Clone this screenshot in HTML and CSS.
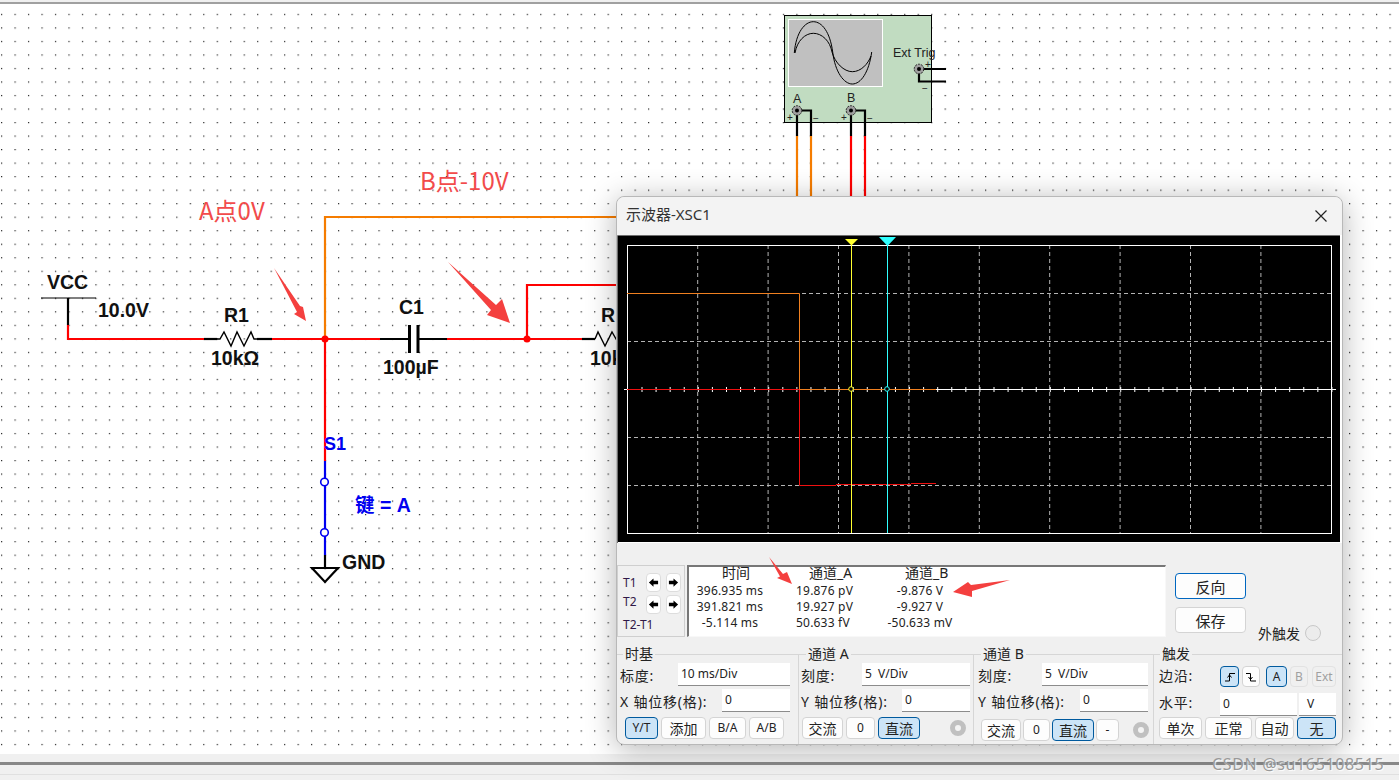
FILE: index.html
```html
<!DOCTYPE html>
<html lang="zh-CN">
<head>
<meta charset="utf-8">
<title>示波器-XSC1</title>
<link rel="stylesheet" href="styles.css">
</head>
<body>
<svg class="defs" width="0" height="0" aria-hidden="true">
  <symbol id="arrow-left" viewBox="0 0 12 12"><path d="M1 6 6 1.5V4.2H11V7.8H6V10.500z"/></symbol>
  <symbol id="arrow-right" viewBox="0 0 12 12"><path d="M11 6 6 1.500V4.200H1V7.800H6V10.500z"/></symbol>
</svg>
<div class="app">
  <div class="topbar"></div>
  <main class="canvas">
    <svg class="schematic" viewBox="0 4 1399 750" width="1399" height="750">
      <defs>
        <pattern id="dots" patternUnits="userSpaceOnUse" x="1" y="0.3" width="13.48" height="13.52">
          <rect class="dot" width="1.2" height="1.2"/>
        </pattern>
      </defs>
      <rect x="0" y="4" width="1399" height="750" fill="url(#dots)"/>

      <!-- wires -->
      <path class="w black thin" d="M41 298H96"/>
      <path class="w black" d="M68 298V325"/>
      <path class="w red" d="M68 325V339H204"/>
      <path class="w black" d="M204 339H217"/>
      <path class="w black zig" d="M217 339 220 339 224 332 231 346 237 332 244 346 251 332 254 339H257"/>
      <path class="w black" d="M257 339H272"/>
      <path class="w red" d="M272 339H380"/>
      <path class="w black" d="M380 339H409M418 339H447"/>
      <path class="w black thick" d="M409.500 325V353M418 325V353"/>
      <path class="w red" d="M447 339H582"/>
      <path class="w black" d="M582 339H595"/>
      <path class="w black zig" d="M595 339 598 332 605 346 612 332 620 346"/>
      <path class="w red" d="M527 339V285H620"/>
      <path class="w orange" d="M325 339V217H620"/>
      <path class="w red" d="M325 339V461"/>
      <path class="w blue" d="M325 461V555"/>
      <circle class="pin" cx="324.500" cy="482" r="3.800"/>
      <circle class="pin" cx="324.500" cy="532.500" r="3.800"/>
      <path class="w black" d="M325 555V567"/>
      <path class="w black" d="M312 568H338L325 582Z"/>
      <circle class="junction" cx="325" cy="339" r="3.500"/>
      <circle class="junction" cx="527" cy="339" r="3.500"/>

      <!-- schematic labels -->
      <text class="part" x="47" y="289">VCC</text>
      <text class="part" x="98" y="317">10.0V</text>
      <text class="part" x="224" y="322">R1</text>
      <text class="part" x="211" y="365">10kΩ</text>
      <text class="part" x="399" y="314">C1</text>
      <text class="part" x="383" y="374">100µF</text>
      <text class="part" x="601" y="322">R</text>
      <text class="part" x="590" y="365">10k</text>
      <text class="part key s1" x="324" y="450">S1</text>
      <text class="part key" x="355" y="512">键 = A</text>
      <text class="part" x="342" y="569">GND</text>
      <text class="note" x="199" y="220">A点0V</text>
      <text class="note" x="420" y="190">B点-10V</text>

      <!-- oscilloscope instrument -->
      <rect class="xsc-body" x="784.500" y="15.500" width="147" height="107"/>
      <rect class="xsc-screen" x="788.500" y="19.500" width="94" height="67"/>
      <path class="curve" d="M794.300 53C796 32 805 21.700 813.300 21.700 822 21.700 830 32 832.700 52 835 72 844 84 852.300 84 861 84 869 72 871.700 52"/>
      <path class="curve" d="M795 53C797 41 805 33.300 813.300 33.300 822 33.300 830 41 832 52 835 63 844 71.700 852.300 71.700 861 71.700 868 64 871 56"/>
      <text class="xsc-text" x="893" y="57">Ext Trig</text>
      <text class="xsc-text" x="793" y="103">A</text>
      <text class="xsc-text" x="847" y="102">B</text>
      <text class="xsc-small" x="925" y="68">+</text>
      <text class="xsc-small" x="922" y="92">−</text>
      <text class="xsc-small" x="787" y="121">+</text>
      <text class="xsc-small" x="813" y="122">−</text>
      <text class="xsc-small" x="841" y="121">+</text>
      <text class="xsc-small" x="867" y="122">−</text>
      <path class="w black" d="M797 110V136M797 110.500H811V136M851 110V136M851 110.500H865V136M919 69H946M919 69V81.500H946"/>
      <path class="w orange" d="M797 136V197M811 136V197"/>
      <path class="w red" d="M851 136V197M865 136V197"/>
      <g class="term">
        <circle cx="797" cy="110.500" r="4.800"/><circle cx="851" cy="110.500" r="4.800"/><circle cx="919" cy="69" r="4.800"/>
      </g>
      <g>
        <circle class="term-dot" cx="797" cy="110.500" r="2"/><circle class="term-dot" cx="851" cy="110.500" r="2"/><circle class="term-dot" cx="919" cy="69" r="2"/>
      </g>
    </svg>
  </main>
  <footer class="statusbar"><div class="status-line"></div><div class="status-edge"></div></footer>

  <section class="scope-window">
    <header class="titlebar">
      <h1 class="title">示波器-XSC1</h1>
      <svg class="close" viewBox="0 0 12 12" width="12" height="12"><path d="M0.500 0.500 11.500 11.500M11.500 0.500 0.500 11.500"/></svg>
    </header>

    <svg class="scope" viewBox="617 235 725 308" width="725" height="308">
      <rect class="sc-frame" x="617" y="235" width="725" height="308"/>
      <path class="sc-edge" d="M617.500 543V235.500H1340"/>
      <rect class="sc-black" x="618" y="236" width="722" height="306"/>
      <path class="sc-grid" d="M697.700 245V533M768.100 245V533M838.500 245V533M908.900 245V533M979.300 245V533M1049.700 245V533M1120.100 245V533M1190.500 245V533M1260.900 245V533M627 293.500H1331M627 341.500H1331M627 437.500H1331M627 485.500H1331"/>
      <rect class="sc-box" x="627.500" y="245.500" width="704" height="288"/>
      <path class="sc-axis" d="M624 389.500H1336"/>
      <path class="sc-ticks" d="M641.500 389.500H1336"/>
      <path class="sc-red" d="M627 389.500H799"/>
      <path class="sc-orange" d="M627 293.500H799.500V389.500H936"/>
      <path class="sc-red" d="M799.500 389.500V485.500H836"/>
      <path class="sc-red thick" d="M836 484.500H911M911 483.500H936"/>
      <path class="sc-yellow" d="M851.500 245V533"/>
      <path class="sc-cyan" d="M887.500 245V533"/>
      <path class="fill-yellow" d="M845 239H858L851.500 245.500Z"/>
      <path class="fill-cyan" d="M879 237H896L887.500 246Z"/>
      <circle class="mark-yellow" cx="851" cy="389" r="2.300"/>
      <circle class="mark-cyan" cx="887" cy="389" r="2.300"/>
    </svg>

    <div class="readout-row">
      <div class="cursors">
        <span class="t-label">T1</span>
        <button class="nudge"><svg width="11" height="11"><use href="#arrow-left"/></svg></button>
        <button class="nudge"><svg width="11" height="11"><use href="#arrow-right"/></svg></button>
        <span class="t-label t-second">T2</span>
        <button class="nudge"><svg width="11" height="11"><use href="#arrow-left"/></svg></button>
        <button class="nudge"><svg width="11" height="11"><use href="#arrow-right"/></svg></button>
        <span class="t-label t-diff">T2-T1</span>
      </div>
      <div class="readout">
        <span class="head h-time">时间</span><span class="head h-a">通道_A</span><span class="head h-b">通道_B</span>
        <span class="val">396.935 ms</span><span class="val left">19.876 pV</span><span class="val">-9.876 V</span>
        <span class="val">391.821 ms</span><span class="val left">19.927 pV</span><span class="val">-9.927 V</span>
        <span class="val">-5.114 ms</span><span class="val left">50.633 fV</span><span class="val">-50.633 mV</span>
      </div>
      <div class="side-actions">
        <button class="btn big focus">反向</button>
        <button class="btn big">保存</button>
      </div>
      <div class="ext-trigger"><span>外触发</span><span class="radio"></span></div>
    </div>

    <div class="controls">
      <fieldset class="group g-time">
        <legend>时基</legend>
        <div class="row"><span class="lbl">标度:</span><span class="field f-time">10 ms/Div</span></div>
        <div class="row"><span class="lbl">X 轴位移(格):</span><span class="field f-offs">0</span></div>
        <div class="btns b-time">
          <button class="btn on lat">Y/T</button><button class="btn">添加</button><button class="btn lat">B/A</button><button class="btn lat">A/B</button>
        </div>
      </fieldset>
      <fieldset class="group g-a">
        <legend>通道 A</legend>
        <div class="row"><span class="lbl">刻度:</span><span class="field f-scale-a">5  V/Div</span></div>
        <div class="row"><span class="lbl">Y 轴位移(格):</span><span class="field f-offs">0</span></div>
        <div class="btns-wrap">
          <div class="btns b-a">
            <button class="btn">交流</button><button class="btn lat">0</button><button class="btn on">直流</button>
          </div>
          <span class="ring"></span>
        </div>
      </fieldset>
      <fieldset class="group g-b">
        <legend>通道 B</legend>
        <div class="row"><span class="lbl">刻度:</span><span class="field f-scale-b">5  V/Div</span></div>
        <div class="row"><span class="lbl">Y 轴位移(格):</span><span class="field f-offs">0</span></div>
        <div class="btns-wrap low">
          <div class="btns b-b">
            <button class="btn">交流</button><button class="btn lat">0</button><button class="btn on">直流</button><button class="btn lat">-</button>
          </div>
          <span class="ring"></span>
        </div>
      </fieldset>
      <fieldset class="group g-t">
        <legend>触发</legend>
        <div class="row trig-edge">
          <span class="lbl">边沿:</span>
          <div class="edge-btns">
            <button class="btn on icon"><svg viewBox="0 0 14 14" width="14" height="14"><path d="M2 11H6.500V3.500H12M4.500 7.500 6.500 5 8.500 7.500"/></svg></button>
            <button class="btn icon"><svg viewBox="0 0 14 14" width="14" height="14"><path d="M2 3.500H6.500V11H12M4.500 7 6.500 9.500 8.500 7"/></svg></button>
            <button class="btn on lat src-a">A</button>
            <button class="btn off lat src-b">B</button>
            <button class="btn off lat src-e">Ext</button>
          </div>
        </div>
        <div class="row trig-level">
          <span class="lbl">水平:</span>
          <span class="field f-level">0</span><span class="field f-unit">V</span>
        </div>
        <div class="btns b-t">
          <button class="btn">单次</button><button class="btn">正常</button><button class="btn">自动</button><button class="btn on">无</button>
        </div>
      </fieldset>
    </div>
  </section>

  <svg class="annotations" viewBox="0 0 1399 780" width="1399" height="780">
    <path d="M274 268 300 306 303 307 306 321 294 314 297 312Z"/>
    <path d="M448 262 496 305 502 299 510 323 487 315 491 310Z"/>
    <path d="M769 557 783 574 787 572 792 584 777 578 780 576.500Z"/>
    <path d="M1010 580 972 591 972 597 953 592 968 582 971 585Z"/>
  </svg>
  <div class="watermark">CSDN @su165108515</div>
</div>
</body>
</html>
```

FILE: styles.css
```css
* { box-sizing: border-box; }
html, body { margin: 0; padding: 0; }
body { background: #fff; overflow: hidden; font-family: "Noto Sans", "Noto Sans CJK SC", sans-serif; color: #222; }
.defs { position: absolute; }
.app { position: relative; width: 1399px; height: 780px; display: flex; flex-direction: column; overflow: hidden; }

.topbar { height: 4px; flex: none; background: #f0f0f0; border-bottom: 2px solid #a0a0a0; }
.canvas { height: 750px; flex: none; background: #fff; }
.schematic { display: block; }
.statusbar { flex: 1; background: #f0f0f0; padding-top: 8px; }
.status-line { height: 3px; background: #888; }
.status-edge { height: 1px; margin-top: 9px; background: #e0e0e0; }

.dot { fill: #222; }
.w { fill: none; stroke-width: 2.2; }
.w.black { stroke: #000; }
.w.red { stroke: #f00; }
.w.orange { stroke: #f57c00; }
.w.blue { stroke: #0000f0; }
.w.thin { stroke-width: 1; }
.w.thick { stroke-width: 3; }
.w.zig { stroke-width: 1.400; }
.pin { fill: #fff; stroke: #0000f0; stroke-width: 1.600; }
.junction { fill: #f00; }
.part { font: bold 19.500px "Liberation Sans", "Noto Sans CJK SC", sans-serif; fill: #111; }
.part.key { fill: #0000f0; }
.part.s1 { font-size: 18px; }
.note { font: 24px "Noto Sans CJK SC", "Noto Sans", sans-serif; fill: #f24b4b; }

.xsc-body { fill: #c1dcc1; stroke: #000; stroke-width: 1; }
.xsc-screen { fill: #c0c0c0; stroke: #fff; stroke-width: 1; }
.curve { fill: none; stroke: #000; stroke-width: 1; }
.xsc-text { font: 12.500px "Liberation Sans", sans-serif; fill: #222; }
.xsc-small { font: 10px "Liberation Sans", sans-serif; fill: #222; }
.term circle { fill: #a0a0a0; stroke: #222; stroke-width: 1; stroke-dasharray: 2 1; }
.term-dot { fill: #000; }

.scope-window {
  position: absolute; left: 616px; top: 196px; width: 727px; height: 549px;
  display: flex; flex-direction: column; background: #f0f0f0;
  border: 1px solid #b8b8b8; border-radius: 8px; overflow: visible;
  box-shadow: 0 4px 30px rgba(0, 0, 0, .3);
}
.titlebar { height: 38px; flex: none; display: flex; align-items: center; justify-content: space-between; padding: 0 15px 0 9px; background: #f3f3f3; border-radius: 8px 8px 0 0; }
.title { margin: 0 0 4px; font-size: 15px; line-height: 20px; font-weight: 400; color: #333; }
.close { fill: none; stroke: #222; stroke-width: 1.200; margin-bottom: 1px; }

.scope { display: block; flex: none; }
.sc-frame { fill: #fff; }
.sc-edge { fill: none; stroke: #6e6e6e; stroke-width: 1; }
.sc-black { fill: #000; }
.sc-grid { fill: none; stroke: #b4b4b4; stroke-width: 1; stroke-dasharray: 4 3; }
.sc-box { fill: none; stroke: #fff; stroke-width: 1; }
.sc-axis { stroke: #fff; stroke-width: 1; }
.sc-ticks { stroke: #fff; stroke-width: 5; stroke-dasharray: 1 13.080; }
.sc-red { fill: none; stroke: #f01010; stroke-width: 1; }
.sc-orange { fill: none; stroke: #f08020; stroke-width: 1; }
.sc-yellow { stroke: #ffff30; stroke-width: 1; }
.sc-cyan { stroke: #30ffff; stroke-width: 1; }
.fill-yellow { fill: #ffff30; }
.fill-cyan { fill: #30ffff; }
.mark-yellow { fill: #000; stroke: #ffff30; stroke-width: 1; }
.mark-cyan { fill: #000; stroke: #30ffff; stroke-width: 1; }

.readout-row { height: 102px; flex: none; display: flex; align-items: flex-start; padding-top: 22px; }
.cursors {
  width: 68px; height: 72px; flex: none; padding: 7px 0 0 5px;
  border: 1px solid #cfcfcf; display: grid;
  grid-template-columns: 18px 15px 15px; grid-auto-rows: 19px; column-gap: 5px; row-gap: 3px; align-items: center;
  margin-right: -1px;
}
.t-label { font-size: 12px; color: #301848; }
.t-second { margin-bottom: 6px; }
.t-diff { grid-column: 1 / -1; margin-bottom: 4px; white-space: nowrap; }
.nudge { width: 15px; height: 19px; padding: 0; display: flex; align-items: center; justify-content: center; background: #fff; border: 1px solid #ddd; border-radius: 4px; }
.readout {
  width: 479px; height: 72px; flex: none; margin-left: 3px; background: #fff;
  border: 1px solid #f8f8f8; border-top: 2px solid #777; border-left: 2px solid #777;
  display: grid; grid-template-columns: 80px 100px 100px; grid-auto-rows: 16px;
  padding-left: 1px; font-size: 12px; line-height: 16px; align-content: start;
}
.head { font-size: 14px; text-align: center; margin-top: -2px; }
.h-time { padding-left: 12px; }
.h-a { text-align: left; padding-left: 39px; }
.h-b { text-align: left; padding-left: 35px; }
.val { text-align: center; white-space: pre; letter-spacing: .2px; color: #222; }
.val.left { text-align: left; padding-left: 26px; }

.side-actions { flex: none; margin-left: 9px; padding-top: 8px; display: flex; flex-direction: column; gap: 8px; }
.ext-trigger { flex: none; display: flex; align-items: center; gap: 5px; margin: 58px 0 0 12px; font-size: 14px; }
.radio { width: 16px; height: 16px; border-radius: 50%; background: #ececec; border: 1px solid #c8c8c8; }

.btn { padding: 0; font: 14px/1 "Noto Sans CJK SC", "Noto Sans", sans-serif; color: #222; background: #fdfdfd; border: 1px solid #d4d4d4; border-radius: 4px; height: 22px; display: flex; align-items: center; justify-content: center; }
.btn.big { width: 71px; height: 26px; font-size: 15px; }
.btn.focus { border-color: #0067c0; }
.btn.lat { font: 12px/1 "Noto Sans", sans-serif; }
.btn.on { background: #cce4f7; border-color: #005a9e; }
.btn.off { background: #f0f0f0; border-color: #e2e2e2; color: #a0a0a0; }
.btn.icon svg { fill: none; stroke: #000; stroke-width: 1; }

.controls { display: grid; grid-template-columns: 182px 175px 180px 188px; flex: 1; }
.group { margin: 0; padding: 0; min-width: 0; border: 0; border-top: 1px solid #d6d6d6; border-right: 1px solid #d6d6d6; display: flex; flex-direction: column; }
.g-t { border-right: 0; }
.group legend { font-size: 14px; line-height: 18px; height: 18px; padding: 0 2px; margin-left: 6px; }
.g-a legend, .g-b legend { margin-left: 7px; }
.row { display: flex; align-items: center; height: 23px; margin-bottom: 3px; font-size: 14px; }
.lbl { flex: 1; white-space: nowrap; font-size: 14px; letter-spacing: .8px; }
.field { flex: none; height: 23px; background: #fff; border-bottom: 1px solid #8c8c8c; font-size: 12px; line-height: 22px; padding-left: 3px; white-space: pre; }
.f-time { width: 112px; }
.f-offs { width: 68px; }
.f-scale-a { width: 108px; }
.f-scale-b { width: 106px; }
.f-level { width: 77px; margin-right: 2px; }
.f-unit { width: 37px; padding-left: 8px; }

.g-time .row { padding: 0 8px 0 3px; }
.g-a .row { padding: 0 3px 0 2px; }
.g-b .row { padding: 0 5px 0 4px; }
.g-t .row { padding: 0 6px 0 5px; }

.btns { display: grid; gap: 3px; }
.b-time { grid-template-columns: 33px 45px 37px 35px; margin: 2px 0 0 8px; }
.btns-wrap { display: flex; justify-content: space-between; align-items: center; margin-top: 2px; }
.btns-wrap.low { margin-top: 4px; }
.g-a .btns-wrap { padding: 0 7px 0 3px; }
.g-b .btns-wrap { padding: 0 4px 0 7px; }
.b-a { grid-template-columns: 41px 29px 42px; }
.b-b { grid-template-columns: 40px 27px 42px 23px; gap: 2px; }
.ring { width: 16px; height: 16px; border-radius: 50%; border: 5px solid #c0c0c0; background: #f4f4f4; }

.trig-edge { height: 27px; padding-top: 4px; }
.trig-edge .lbl { margin-top: -4px; }
.edge-btns { display: flex; }
.edge-btns .btn { height: 21px; }
.edge-btns .btn.icon { width: 19px; margin-right: 3px; }
.edge-btns .btn.icon + .btn.icon { width: 18px; margin-right: 6px; }
.src-a { width: 21px; margin-right: 3px; }
.src-b { width: 18px; margin-right: 4px; }
.src-e { width: 24px; }
.trig-level { padding-right: 6px; margin-bottom: 1px; }
.trig-level .lbl { margin-top: -6px; }
.b-t { grid-template-columns: 43px 47px 39px 39px; margin-left: 5px; }

.annotations { position: absolute; left: 0; top: 0; pointer-events: none; fill: #f4403f; }
.watermark { position: absolute; left: 1212px; top: 754px; font: 16px/20px "Noto Sans", sans-serif; letter-spacing: .65px; color: #999; text-shadow: 1px 1px 1px #fff; white-space: nowrap; }
```
